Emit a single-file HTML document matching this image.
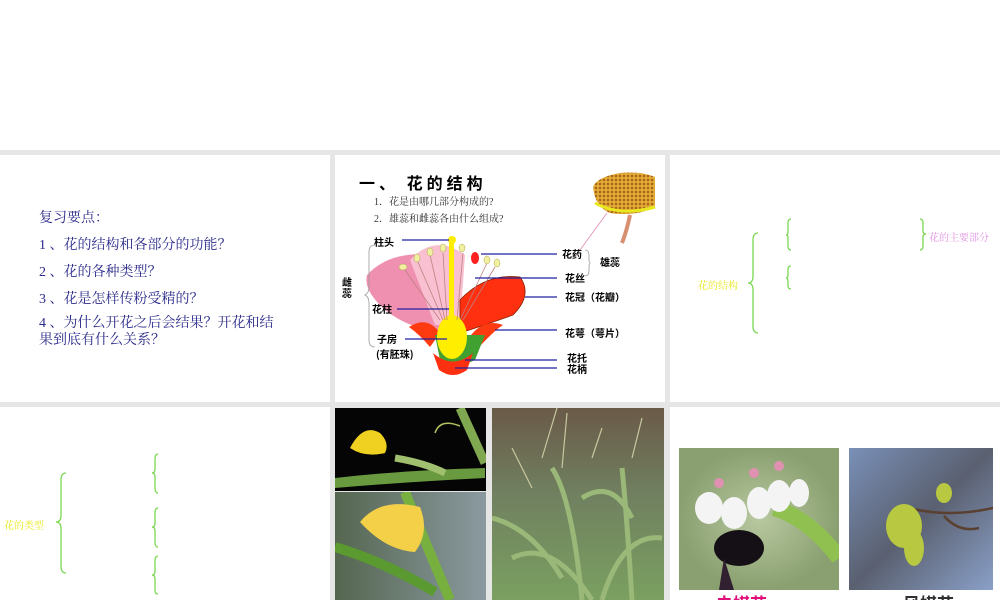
<!DOCTYPE html>
<html style="width:1000px;height:600px;overflow:hidden"><head><meta charset="utf-8">
<style>
*{margin:0;padding:0;box-sizing:border-box}
body{width:1000px;height:600px;overflow:hidden;background:#e6e6e6;position:relative;font-family:"Liberation Serif","Noto Serif CJK SC",serif}
.p{position:absolute;background:#fff}
.t{position:absolute;white-space:nowrap}
.q{color:#2a2a8a;font-size:14px;font-family:"Liberation Serif","Noto Serif CJK SC",serif}
</style></head><body>
<div class="p" style="left:0;top:0;width:1000px;height:150px"></div>
<div class="p" style="left:0;top:155px;width:330px;height:247px"></div>
<div class="p" style="left:335px;top:155px;width:330px;height:247px"></div>
<div class="p" style="left:670px;top:155px;width:330px;height:247px"></div>
<div class="p" style="left:0;top:407px;width:330px;height:193px"></div>
<div class="p" style="left:670px;top:407px;width:330px;height:193px"></div>

<div class="t q" style="left:39px;top:207px">复习要点：</div>
<div class="t q" style="left:39px;top:234px">1 、花的结构和各部分的功能？</div>
<div class="t q" style="left:39px;top:261px">2 、花的各种类型？</div>
<div class="t q" style="left:39px;top:288px">3 、花是怎样传粉受精的？</div>
<div class="t q" style="left:39px;top:315px;line-height:17px">4 、为什么开花之后会结果？开花和结<br>果到底有什么关系？</div>

<svg style="position:absolute;left:335px;top:155px" width="330" height="247" font-family="Liberation Serif,Noto Serif CJK SC,serif">
<defs><pattern id="dots" width="4" height="4" patternUnits="userSpaceOnUse"><rect width="4" height="4" fill="#d8a030"/><circle cx="1" cy="1" r="1" fill="#a05010"/><circle cx="3" cy="3" r="0.8" fill="#f0c040"/></pattern></defs>
<text x="24" y="34" font-size="16" font-weight="bold" font-family="Noto Sans CJK SC,sans-serif" letter-spacing="4">一、 花的结构</text>
<text x="39" y="50" font-size="10" fill="#333">1．花是由哪几部分构成的?</text>
<text x="39" y="67" font-size="10" fill="#333">2．雄蕊和雌蕊各由什么组成?</text>
<!-- pollen -->
<path d="M295 60 Q292 75 287 88" stroke="#d89070" stroke-width="4" fill="none"/>
<path d="M258 32 Q262 22 285 18 Q305 16 320 22 L320 52 Q300 62 275 58 Q260 52 258 32Z" fill="url(#dots)"/>
<path d="M260 48 Q285 62 320 52" stroke="#e8e820" stroke-width="3" fill="none"/>
<line x1="272" y1="58" x2="245" y2="95" stroke="#e080b0" stroke-width="0.7"/>
<!-- flower -->
<path d="M32 120 Q55 95 100 100 Q112 140 112 175 Q80 178 50 155 Q28 135 32 120Z" fill="#f090b0"/>
<path d="M75 105 Q100 78 130 100 L125 170 L100 170Z" fill="#f8c0d0"/>
<path d="M125 145 Q150 118 185 122 Q198 140 178 160 Q150 170 125 178Z" fill="#ff3010" stroke="#802000" stroke-width="0.8"/>
<path d="M74 172 Q92 160 105 178 L95 192 Q85 180 74 172Z M168 170 Q150 163 136 180 L146 190 Q160 175 168 170Z" fill="#ff3a10"/>
<path d="M100 180 L150 180 L140 205 Q120 215 105 205Z" fill="#40a030"/>
<ellipse cx="117" cy="182" rx="15" ry="22" fill="#ffee00"/>
<rect x="114" y="85" width="5" height="90" fill="#ffee00"/>
<circle cx="117" cy="85" r="4" fill="#ffee00"/>
<path d="M98 198 Q118 215 138 198 L132 215 Q118 225 104 215Z" fill="#ff3010"/>
<ellipse cx="140" cy="103" rx="4" ry="6" fill="#ff2020"/>
<g stroke="#c08080" stroke-width="0.8" fill="none"><path d="M70 115 L105 165 M82 105 L108 165 M95 100 L110 165 M108 98 L112 165 M128 98 L122 165 M152 108 L125 165 M160 112 L128 165"/></g>
<g fill="#f0f0a0" stroke="#b0a050" stroke-width="0.5"><ellipse cx="68" cy="112" rx="4" ry="3"/><ellipse cx="82" cy="103" rx="3" ry="4"/><ellipse cx="95" cy="97" rx="3" ry="4"/><ellipse cx="108" cy="93" rx="3" ry="4"/><ellipse cx="127" cy="93" rx="3" ry="4"/><ellipse cx="152" cy="105" rx="3" ry="4"/><ellipse cx="162" cy="108" rx="3" ry="4"/></g>
<g stroke="#2020a0" stroke-width="1.2"><line x1="67" y1="85" x2="114" y2="85"/><line x1="62" y1="154" x2="114" y2="154"/><line x1="70" y1="184" x2="112" y2="184"/><line x1="146" y1="99" x2="222" y2="99"/><line x1="140" y1="123" x2="222" y2="123"/><line x1="190" y1="142" x2="222" y2="142"/><line x1="160" y1="175" x2="222" y2="175"/><line x1="130" y1="205" x2="222" y2="205"/><line x1="120" y1="213" x2="222" y2="213"/></g>
<path d="M40 90 Q34 90 34 97 L34 132 Q34 138 30 140 Q34 142 34 148 L34 185 Q34 192 40 192" stroke="#999" fill="none" stroke-width="0.8"/>
<path d="M250 95 Q254 95 254 100 L254 106 Q256 108 254 110 L254 116 Q254 121 250 121" stroke="#999" fill="none" stroke-width="0.8"/>
<g font-size="10" font-weight="bold" font-family="Noto Sans CJK SC,sans-serif">
<text x="39" y="91">柱头</text><text x="37" y="158">花柱</text><text x="42" y="188">子房</text><text x="41" y="203">(有胚珠)</text>
<text x="7" y="131">雌</text><text x="7" y="142">蕊</text>
<text x="227" y="103">花药</text><text x="230" y="127">花丝</text><text x="230" y="146">花冠（花瓣）</text><text x="230" y="182">花萼（萼片）</text><text x="232" y="207">花托</text><text x="232" y="218">花柄</text><text x="265" y="111">雄蕊</text>
</g>
</svg>

<svg style="position:absolute;left:0;top:0" width="1000" height="600" fill="none" stroke="#7ad850" stroke-width="1.3">
<path d="M758 233 Q753 233 753 240 L753 276 Q753 283 748 283 Q753 283 753 290 L753 326 Q753 333 758 333"/>
<path d="M791 219 Q788 219 788 223 L788 232 Q788 235 786 235 Q788 235 788 238 L788 246 Q788 250 791 250"/>
<path d="M791 266 Q788 266 788 269 L788 275 Q788 278 786 278 Q788 278 788 281 L788 286 Q788 289 791 289"/>
<path d="M920 219 Q923 219 923 223 L923 231 Q923 234 926 234 Q923 234 923 237 L923 246 Q923 250 920 250"/>
<path d="M66 473 Q61 473 61 480 L61 515 Q61 522 56 522 Q61 522 61 529 L61 566 Q61 573 66 573"/>
<path d="M158 454 Q155 454 155 459 L155 469 Q155 473 152 473 Q155 473 155 477 L155 488 Q155 493 158 493"/>
<path d="M158 508 Q155 508 155 513 L155 523 Q155 527 152 527 Q155 527 155 531 L155 542 Q155 547 158 547"/>
<path d="M158 556 Q155 556 155 561 L155 571 Q155 575 152 575 Q155 575 155 579 L155 590 Q155 594 158 594"/>
</svg>
<div class="t" style="left:698px;top:277px;font-size:10px;color:#e8e820">花的结构</div>
<div class="t" style="left:929px;top:229px;font-size:10px;color:#e090e0">花的主要部分</div>
<div class="t" style="left:4px;top:517px;font-size:10px;color:#e8e820">花的类型</div>

<!-- cucumber top -->
<svg style="position:absolute;left:335px;top:408px" width="151" height="83">
<rect width="151" height="83" fill="#050505"/>
<path d="M0 70 Q70 62 150 60 L150 70 Q70 74 0 80Z" fill="#6a9a40"/>
<path d="M60 50 Q90 55 110 65" stroke="#a0c070" stroke-width="7"/>
<path d="M125 0 L150 55" stroke="#80a850" stroke-width="9"/>
<path d="M15 40 Q28 15 45 25 Q55 35 50 45 Q30 50 15 40Z" fill="#f0d020"/>
<path d="M100 25 Q105 10 125 18" stroke="#b0c060" stroke-width="1.5" fill="none"/>
</svg>
<!-- cucumber bottom -->
<svg style="position:absolute;left:335px;top:492px" width="151" height="108">
<defs><linearGradient id="g1" x1="0" x2="1"><stop offset="0" stop-color="#556650"/><stop offset="1" stop-color="#8a9aa0"/></linearGradient></defs>
<rect width="151" height="108" fill="url(#g1)"/>
<path d="M70 0 Q90 50 115 108" stroke="#78b040" stroke-width="10"/>
<path d="M0 55 Q50 70 100 100" stroke="#5a9a30" stroke-width="10"/>
<path d="M25 30 Q45 5 85 15 Q95 40 80 60 Q50 58 25 30Z" fill="#f4d048"/>
</svg>
<!-- corn -->
<svg style="position:absolute;left:492px;top:408px" width="172" height="192">
<defs><linearGradient id="g2" x1="0" y1="0" x2="0" y2="1"><stop offset="0" stop-color="#6a5a48"/><stop offset="0.45" stop-color="#708060"/><stop offset="1" stop-color="#7aa060"/></linearGradient></defs>
<rect width="172" height="192" fill="url(#g2)"/>
<g stroke="#9ab878" stroke-width="5" fill="none"><path d="M0 110 Q40 120 70 170"/><path d="M60 60 Q80 90 90 192"/><path d="M130 60 Q135 110 140 192"/><path d="M90 90 Q120 70 140 110"/><path d="M20 150 Q60 130 100 192"/><path d="M170 130 Q130 125 110 192"/></g>
<g stroke="#c8c8a0" stroke-width="1.2"><path d="M50 50 L65 0 M70 60 L75 5 M100 50 L110 20 M140 50 L150 10 M40 80 L20 40"/></g>
</svg>
<!-- bee -->
<svg style="position:absolute;left:679px;top:448px" width="160" height="142">
<defs><radialGradient id="g3"><stop offset="0" stop-color="#b8c8a0"/><stop offset="1" stop-color="#8aa070"/></radialGradient></defs>
<rect width="160" height="142" fill="url(#g3)"/>
<path d="M95 60 Q130 70 160 110" stroke="#90c050" stroke-width="16"/>
<g fill="#f4f4f4"><ellipse cx="30" cy="60" rx="14" ry="16"/><ellipse cx="55" cy="65" rx="13" ry="16"/><ellipse cx="80" cy="55" rx="12" ry="16"/><ellipse cx="100" cy="48" rx="12" ry="16"/><ellipse cx="120" cy="45" rx="10" ry="14"/></g>
<g fill="#e090b0"><circle cx="40" cy="35" r="5"/><circle cx="75" cy="25" r="5"/><circle cx="100" cy="18" r="5"/></g>
<ellipse cx="60" cy="100" rx="25" ry="18" fill="#151015"/>
<path d="M45 110 L40 142 L55 142 Z" fill="#302030"/>
</svg>
<!-- maple -->
<svg style="position:absolute;left:849px;top:448px" width="144" height="142">
<defs><linearGradient id="g4" x1="0" y1="0" x2="1" y2="1"><stop offset="0" stop-color="#7a90b8"/><stop offset="0.5" stop-color="#5a6070"/><stop offset="1" stop-color="#8aa0c8"/></linearGradient></defs>
<rect width="144" height="142" fill="url(#g4)"/>
<path d="M60 60 Q100 70 144 60 M95 68 Q110 85 130 80" stroke="#5a4030" stroke-width="2.5" fill="none"/>
<g fill="#b8c840"><ellipse cx="55" cy="78" rx="18" ry="22"/><ellipse cx="65" cy="100" rx="10" ry="18"/><ellipse cx="95" cy="45" rx="8" ry="10"/></g>
</svg>
<div class="t" style="left:716px;top:594px;font-size:17px;line-height:17px;font-weight:bold;color:#e0107a;font-family:'Noto Sans CJK SC',sans-serif">虫媒花</div>
<div class="t" style="left:903px;top:594px;font-size:17px;line-height:17px;font-weight:bold;color:#303030;font-family:'Noto Sans CJK SC',sans-serif">风媒花</div>
</body></html>
